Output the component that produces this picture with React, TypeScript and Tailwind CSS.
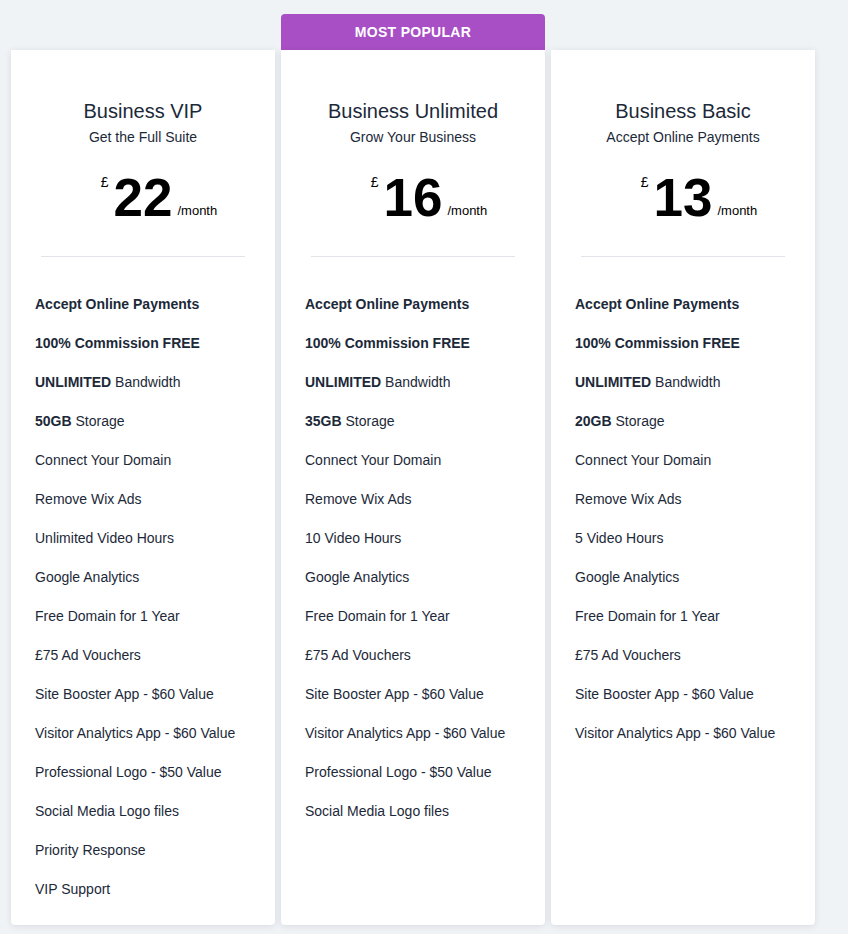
import React from "react";

type Feature = { bold?: string; text?: string };

type Plan = {
  name: string;
  tagline: string;
  price: string;
  popular?: boolean;
  features: Feature[];
};

const common = (storage: string): Feature[] => [
  { bold: "Accept Online Payments" },
  { bold: "100% Commission FREE" },
  { bold: "UNLIMITED", text: " Bandwidth" },
  { bold: storage, text: " Storage" },
  { text: "Connect Your Domain" },
  { text: "Remove Wix Ads" },
];

const plans: Plan[] = [
  {
    name: "Business VIP",
    tagline: "Get the Full Suite",
    price: "22",
    features: [
      ...common("50GB"),
      { text: "Unlimited Video Hours" },
      { text: "Google Analytics" },
      { text: "Free Domain for 1 Year" },
      { text: "£75 Ad Vouchers" },
      { text: "Site Booster App - $60 Value" },
      { text: "Visitor Analytics App - $60 Value" },
      { text: "Professional Logo - $50 Value" },
      { text: "Social Media Logo files" },
      { text: "Priority Response" },
      { text: "VIP Support" },
    ],
  },
  {
    name: "Business Unlimited",
    tagline: "Grow Your Business",
    price: "16",
    popular: true,
    features: [
      ...common("35GB"),
      { text: "10 Video Hours" },
      { text: "Google Analytics" },
      { text: "Free Domain for 1 Year" },
      { text: "£75 Ad Vouchers" },
      { text: "Site Booster App - $60 Value" },
      { text: "Visitor Analytics App - $60 Value" },
      { text: "Professional Logo - $50 Value" },
      { text: "Social Media Logo files" },
    ],
  },
  {
    name: "Business Basic",
    tagline: "Accept Online Payments",
    price: "13",
    features: [
      ...common("20GB"),
      { text: "5 Video Hours" },
      { text: "Google Analytics" },
      { text: "Free Domain for 1 Year" },
      { text: "£75 Ad Vouchers" },
      { text: "Site Booster App - $60 Value" },
      { text: "Visitor Analytics App - $60 Value" },
    ],
  },
];

function PlanBody({ plan }: { plan: Plan }) {
  return (
    <div className="flex-1 bg-white rounded-b-[4px] shadow-[0_1px_6px_rgba(30,40,60,0.12)] pt-[49px] pb-[16px]">
      <h2 className="text-center text-[20px] leading-[24px] text-[#1c2939]">{plan.name}</h2>
      <p className="mt-[6px] text-center text-[14px] leading-[16px] text-[#1c2939]">{plan.tagline}</p>
      <div className="mt-[26px] flex justify-center text-black">
        {/* number sits centred; currency and period hang off its sides */}
        <div className="relative">
          <span className="absolute right-full top-[4px] mr-[5px] text-[14px] leading-none">£</span>
          <span className="block text-[53px] leading-[53px] font-bold">{plan.price}</span>
          <span className="absolute left-full top-[33px] ml-[5px] text-[13px] leading-none">/month</span>
        </div>
      </div>
      <div className="mx-[30px] mt-[32px] h-px bg-[#e3e4ea]" />
      <ul className="mt-[28px] px-[24px]">
        {plan.features.map((f, i) => (
          <li key={i} className="h-[39px] flex items-center text-[14px] text-[#1c2939]">
            <span>
              {f.bold && <b className="font-bold">{f.bold}</b>}
              {f.text}
            </span>
          </li>
        ))}
      </ul>
    </div>
  );
}

export default function App() {
  return (
    <div
      className="min-h-[934px] bg-[#f0f3f6] pl-[11px] pt-[14px] pb-[9px]"
      style={{ fontFamily: '"Liberation Sans", Arial, sans-serif' }}
    >
      <div className="flex items-stretch gap-[6px]">
        {plans.map((plan) => (
          <div key={plan.name} className={`w-[264px] flex flex-col ${plan.popular ? "" : "pt-[36px]"}`}>
            {plan.popular && (
              <div className="h-[36px] rounded-t-[4px] bg-[#a94fc6] flex items-center justify-center text-white text-[14px] font-semibold tracking-[0.3px]">
                MOST POPULAR
              </div>
            )}
            <PlanBody plan={plan} />
          </div>
        ))}
      </div>
    </div>
  );
}
